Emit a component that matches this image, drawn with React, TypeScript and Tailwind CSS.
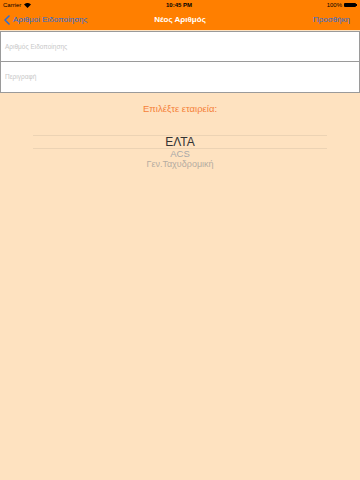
export default function App() {
  return (
    <div className="flex h-[480px] w-[360px] flex-col bg-[#fee2c0] font-['Helvetica_Neue','Liberation_Sans',Arial,sans-serif]">
      {/* status bar + nav */}
      <div className="bg-[#ff7f00]">
        <div className="flex h-[10px] items-center justify-between px-[3px] text-[6px] text-black">
          <div className="flex items-center gap-[3px]">
            <span>Carrier</span>
            <svg width="7" height="5" viewBox="0 0 10 7">
              <path d="M5 7 L0 2 A7 7 0 0 1 10 2 Z" fill="#000" />
            </svg>
          </div>
          <span className="font-semibold">10:45 PM</span>
          <div className="flex items-center gap-[2px]">
            <span>100%</span>
            <div className="flex items-center">
              <div className="h-[4px] w-[12px] rounded-[1px] bg-black" />
              <div className="h-[2px] w-[1px] bg-black" />
            </div>
          </div>
        </div>
        <div className="relative flex h-[20px] items-center justify-between px-[4px]">
          <div className="flex items-center gap-[3px] text-[8px] text-[#2b6ed8]">
            <svg width="6" height="10" viewBox="0 0 6 10">
              <path d="M5 1 L1 5 L5 9" fill="none" stroke="#2b6ed8" strokeWidth="1.6" strokeLinecap="round" strokeLinejoin="round" />
            </svg>
            <span>Αριθμοί Ειδοποίησης</span>
          </div>
          <span className="absolute left-1/2 -translate-x-1/2 text-[8px] font-semibold text-white">Νέος Αριθμός</span>
          <span className="pr-[6px] text-[8px] text-[#2b6ed8]">Προσθήκη</span>
        </div>
      </div>

      {/* fields */}
      <div className="mt-[1px] flex h-[31px] items-center border border-[#9a9a9a] bg-white px-[4px] text-[6.5px] text-[#c8c8c8]">
        Αριθμός Ειδοποίησης
      </div>
      <div className="flex h-[31px] items-center border border-t-0 border-[#9a9a9a] bg-white px-[4px] text-[6.5px] text-[#c8c8c8]">
        Περιγραφή
      </div>

      <div className="mt-[9px] text-center text-[9.5px] text-[#f5813a]">Επιλέξτε εταιρεία:</div>

      {/* picker */}
      <div className="mx-[33px] mt-[19px] flex flex-col items-center">
        <div className="h-px w-full bg-[#ecd3b4]" />
        <div className="flex h-[12px] items-center text-[12px] leading-none text-[#333]">ΕΛΤΑ</div>
        <div className="h-px w-full bg-[#ecd3b4]" />
        <div className="text-[9.5px] leading-[10px] text-[#a8a8a8]">ACS</div>
        <div className="text-[9px] leading-[10px] text-[#b5aca0]">Γεν.Ταχυδρομική</div>
      </div>
    </div>
  );
}
